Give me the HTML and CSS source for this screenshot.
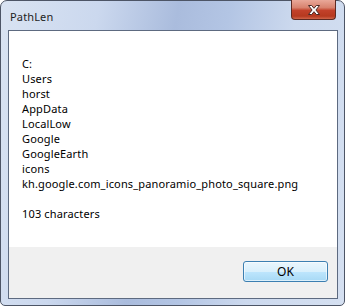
FILE: index.html
```html
<!DOCTYPE html>
<html lang="en">
<head>
    <meta charset="UTF-8">
    <title>PathLen</title>
    <link rel="stylesheet" href="styles.css">
</head>
<body>
    <div class="window">
        <div class="titlebar">
            <span class="title">PathLen</span>
            <div class="close-button">
                <svg xmlns="http://www.w3.org/2000/svg" width="16" height="12" viewBox="0 0 16 12">
                    <path d="M2.5 1.5h3.2L8 4.3l2.3-2.8h3.2L9.9 6l3.6 4.5h-3.2L8 7.7l-2.3 2.8H2.5L6.1 6z" fill="#fff" stroke="#4a2a26" stroke-width="1" stroke-linejoin="round"/>
                </svg>
            </div>
        </div>
        <div class="client">
            <div class="message">
                <div>C:</div>
                <div>Users</div>
                <div>horst</div>
                <div>AppData</div>
                <div>LocalLow</div>
                <div>Google</div>
                <div>GoogleEarth</div>
                <div>icons</div>
                <div>kh.google.com_icons_panoramio_photo_square.png</div>
                <div class="spacer"></div>
                <div>103 characters</div>
            </div>
            <div class="button-bar">
                <button class="ok-button">OK</button>
            </div>
        </div>
    </div>
</body>
</html>
```

FILE: styles.css
```css
body {
    margin: 0;
    background-color: #fff;
    font-family: "Noto Sans", sans-serif;
    font-size: 11px;
    letter-spacing: 0.15px;
}

.window {
    width: 345px;
    height: 306px;
    box-sizing: border-box;
    display: flex;
    flex-direction: column;
    padding: 0 6px 6px 7px;
    border: 1px solid #4d5566;
    border-radius: 7px 7px 5px 5px;
    background: linear-gradient(100deg, #d9e3f2 0%, #cbd8ee 25%, #aabcdd 45%, #b3c5e4 58%, #ccd9ee 75%, #d5e0f1 100%);
}

.titlebar {
    height: 29px;
    display: flex;
    align-items: flex-start;
    margin: 0 0 0 -7px;
    padding: 0 2px 0 9px;
}

.title {
    padding-top: 8px;
    line-height: 15px;
    color: #1e1e1e;
}

.close-button {
    margin: -1px 0 0 auto;
    width: 43px;
    height: 19px;
    display: flex;
    align-items: center;
    justify-content: center;
    border: 1px solid #5c2a22;
    border-top: none;
    border-radius: 0 0 4px 4px;
    background: linear-gradient(180deg, #e9a899 0%, #d8826e 40%, #c2412a 55%, #b6391f 85%, #d0654a 100%);
}

.close-button svg {
    display: block;
}

.client {
    flex: 1;
    display: flex;
    flex-direction: column;
    border: 1px solid #5d6a80;
}

.message {
    flex: 1;
    padding: 25px 13px 0;
    background-color: #fff;
    color: #000;
    line-height: 15px;
}

.spacer {
    height: 15px;
}

.button-bar {
    height: 51px;
    display: flex;
    justify-content: flex-end;
    padding: 14px 9px 0 0;
    box-sizing: border-box;
    background-color: #f0f0f0;
}

.ok-button {
    width: 85px;
    height: 21px;
    padding: 0;
    font-family: inherit;
    font-size: 12px;
    color: #000;
    border: 1px solid #3c7fb1;
    border-radius: 3px;
    background: linear-gradient(180deg, #eaf6fd 0%, #d9f0fc 50%, #bee6fd 51%, #a7d9f5 100%);
    box-shadow: inset 0 0 0 1px rgba(255, 255, 255, 0.6);
}
```
